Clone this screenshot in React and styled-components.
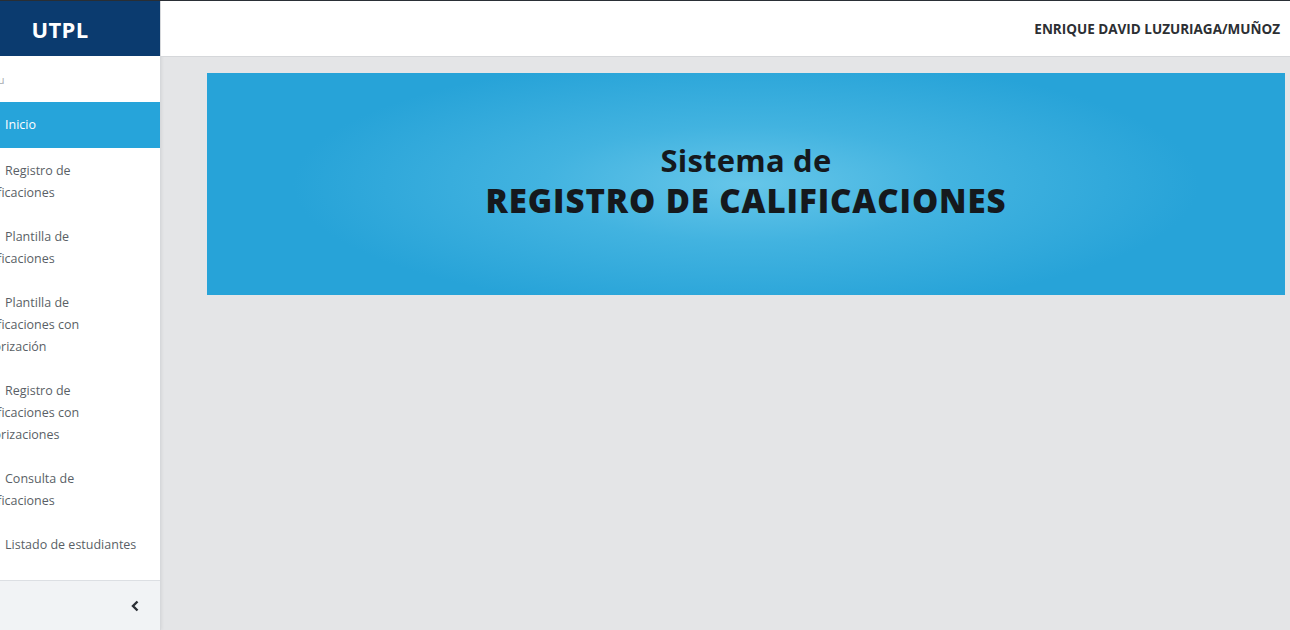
import React from "react";
import styled, { createGlobalStyle } from "styled-components";

const GlobalStyle = createGlobalStyle`
  html, body {
    margin: 0;
    padding: 0;
    height: 100%;
    overflow: hidden;
    background: #e4e5e7;
    font-family: "Open Sans", "Liberation Sans", sans-serif;
  }
  #root { height: 100%; }
`;

const Shell = styled.div`
  display: flex;
  height: 630px;
  margin-left: -40px;
  border-top: 1px solid #2a2f36;
  box-sizing: border-box;
`;

const Sidebar = styled.aside`
  width: 200px;
  flex: none;
  display: flex;
  flex-direction: column;
  background: #fff;
  border-right: 1px solid #d6d8db;
  box-shadow: 1px 0 3px rgba(0, 0, 0, 0.06);
`;

const Brand = styled.div`
  height: 55px;
  display: flex;
  align-items: center;
  justify-content: center;
  background: #0b3b6f;
  color: #fff;
  font-weight: 700;
  font-size: 22px;
  letter-spacing: 0.3px;
`;

const MenuLabel = styled.div`
  height: 46px;
  display: flex;
  align-items: center;
  padding-left: 15px;
  font-size: 11px;
  color: #a9adb2;
`;

const Nav = styled.nav`
  flex: 1;
  display: flex;
  flex-direction: column;
`;

const Item = styled.a`
  display: block;
  padding: 12px 12px ${(p) => (p.$active ? "12px" : "10px")} 16px;
  font-size: 12.5px;
  line-height: 22px;
  color: ${(p) => (p.$active ? "#fff" : "#5a5f66")};
  background: ${(p) => (p.$active ? "#26a4da" : "transparent")};
  text-decoration: none;
`;

const Icon = styled.span`
  display: inline-block;
  width: 16px;
  height: 10px;
  margin-right: 13px;
`;

const Collapse = styled.div`
  height: 49px;
  border-top: 1px solid #dcdfe3;
  background: #f1f3f5;
  display: flex;
  align-items: center;
  justify-content: flex-end;
  padding-right: 20px;
  color: #2b2f35;
`;

const Main = styled.div`
  flex: 1;
  display: flex;
  flex-direction: column;
  min-width: 0;
`;

const Topbar = styled.header`
  height: 55px;
  flex: none;
  background: #fff;
  border-bottom: 1px solid #d5d7da;
  display: flex;
  align-items: center;
  justify-content: flex-end;
  padding-right: 10px;
`;

const UserName = styled.span`
  font-size: 13.5px;
  font-weight: 700;
  color: #2c2f33;
`;

const Content = styled.main`
  flex: 1;
  padding: 16px 5px 0 46px;
`;

const Banner = styled.section`
  height: 222px;
  display: flex;
  flex-direction: column;
  align-items: center;
  justify-content: center;
  padding-bottom: 6px;
  box-sizing: border-box;
  background: radial-gradient(ellipse 42% 58% at 50% 50%, #66c6e9 0%, #42b3e0 45%, #27a3d8 100%);
  color: #15191d;
  text-align: center;
`;

const Kicker = styled.div`
  font-size: 31px;
  font-weight: 700;
  line-height: 40px;
  letter-spacing: 0.2px;
`;

const Title = styled.h1`
  margin: 0;
  font-size: 33px;
  font-weight: 800;
  line-height: 42px;
  letter-spacing: 0.9px;
`;

const items = [
  "Registro de Calificaciones",
  "Plantilla de Calificaciones",
  "Plantilla de Calificaciones con Valorización",
  "Registro de Calificaciones con Valorizaciones",
  "Consulta de Calificaciones",
  "Listado de estudiantes",
];

export default function App() {
  return (
    <>
      <GlobalStyle />
      <Shell>
        <Sidebar>
          <Brand>UTPL</Brand>
          <MenuLabel>Menu</MenuLabel>
          <Nav>
            <Item $active>
              <Icon />Inicio
            </Item>
            {items.map((t) => (
              <Item key={t}>
                <Icon />
                {t}
              </Item>
            ))}
          </Nav>
          <Collapse>
            <svg width="10" height="12" viewBox="0 0 10 12">
              <path d="M7.5 1.5 L3 6 L7.5 10.5" fill="none" stroke="currentColor" strokeWidth="2.4" />
            </svg>
          </Collapse>
        </Sidebar>
        <Main>
          <Topbar>
            <UserName>ENRIQUE DAVID LUZURIAGA/MUÑOZ</UserName>
          </Topbar>
          <Content>
            <Banner>
              <Kicker>Sistema de</Kicker>
              <Title>REGISTRO DE CALIFICACIONES</Title>
            </Banner>
          </Content>
        </Main>
      </Shell>
    </>
  );
}
